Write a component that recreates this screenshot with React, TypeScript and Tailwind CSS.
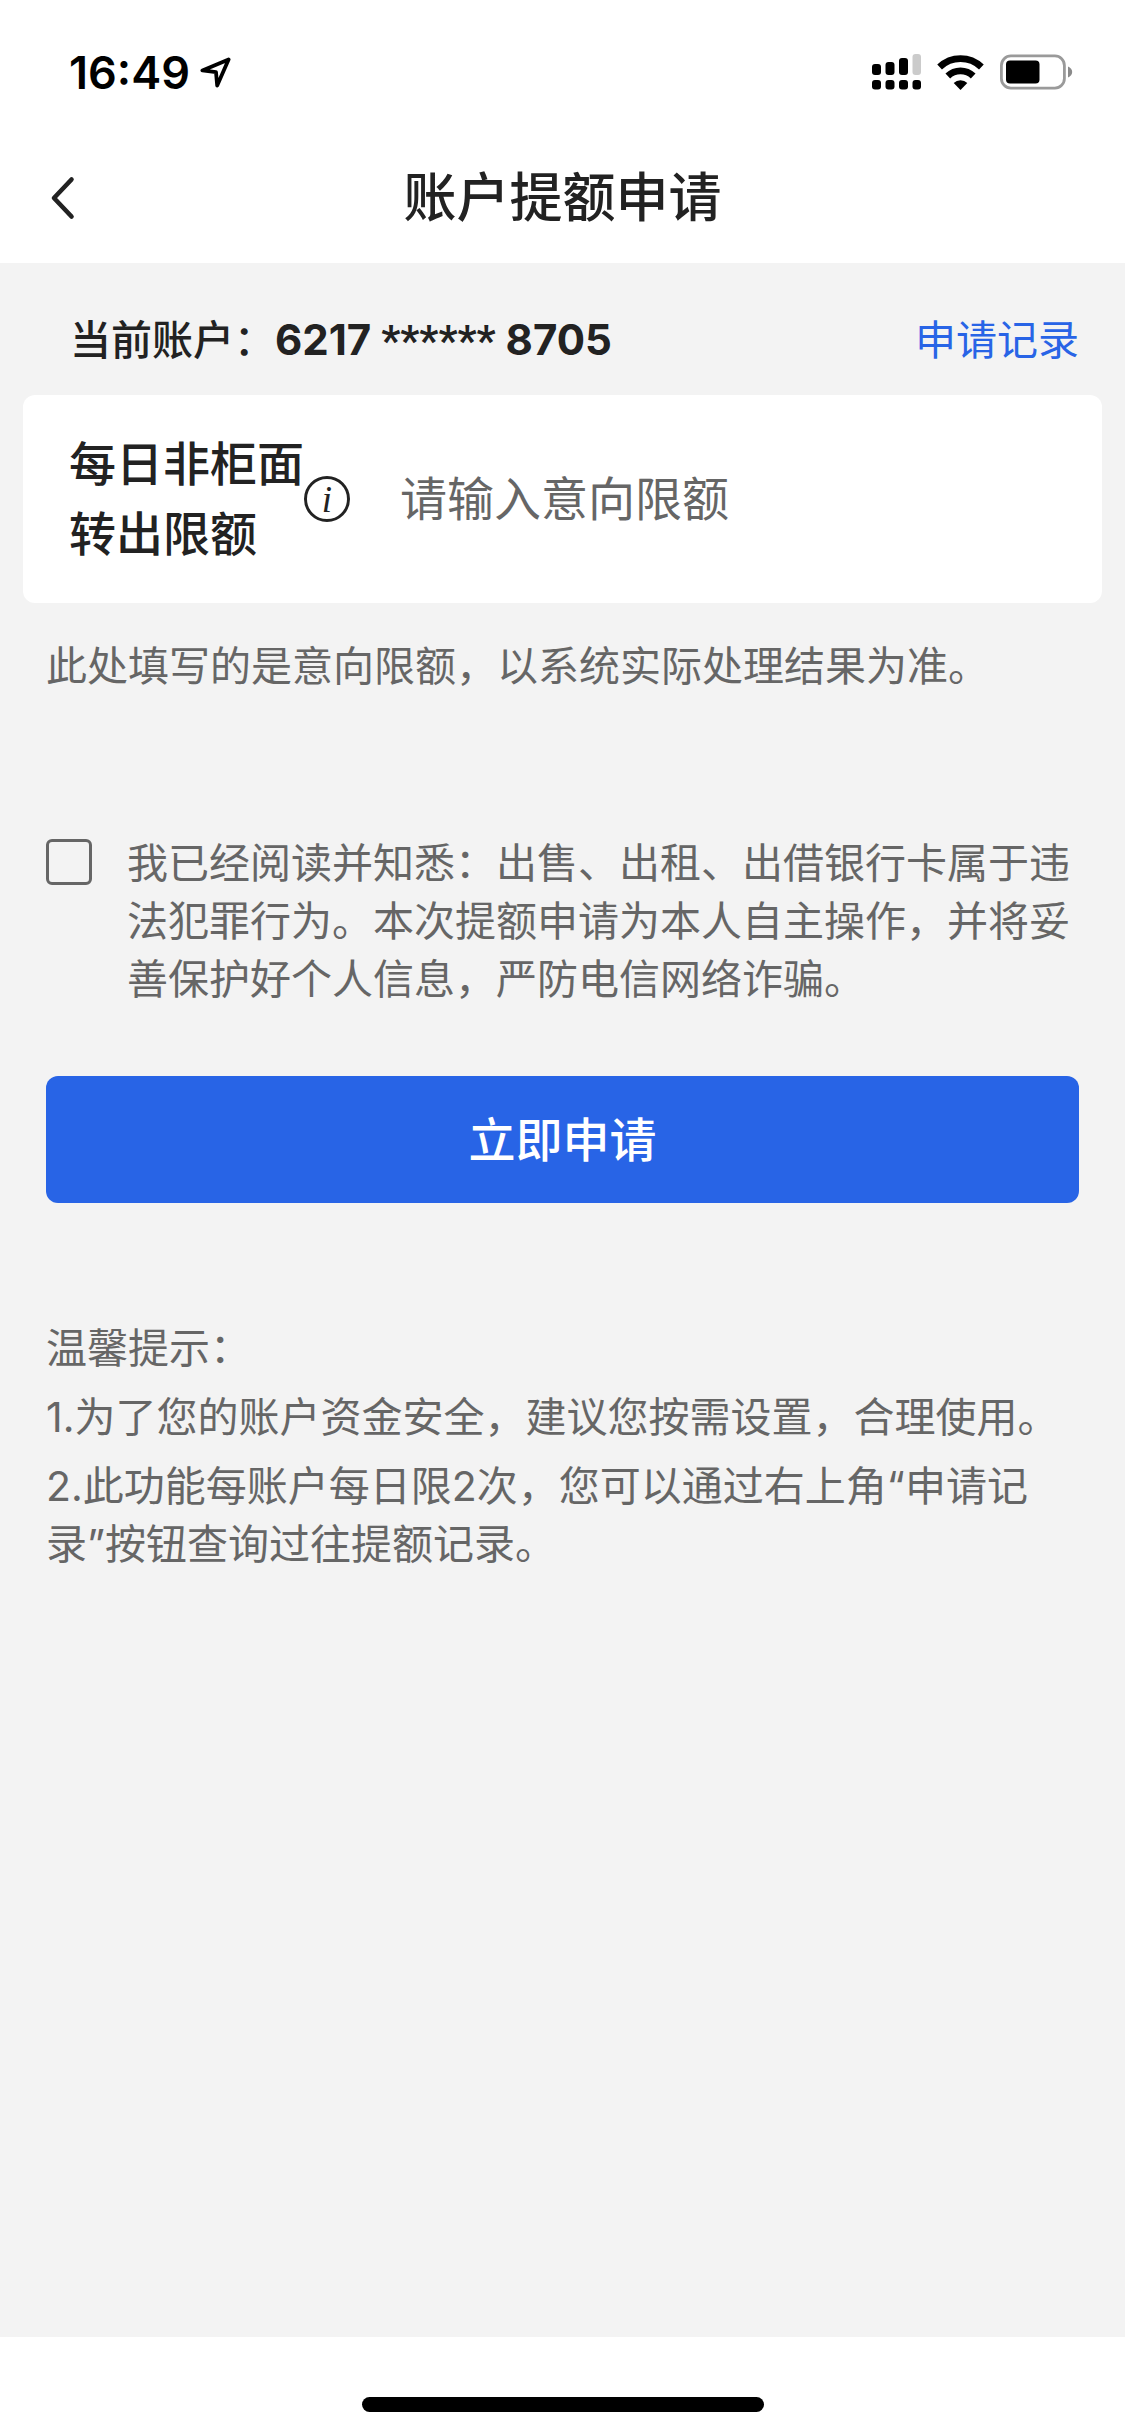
import React, { useState } from 'react';

const TIPS = [
  '1.为了您的账户资金安全，建议您按需设置，合理使用。',
  '2.此功能每账户每日限2次，您可以通过右上角“申请记录”按钮查询过往提额记录。',
];

const StatusBar: React.FC = () => (
  <div className="flex h-[132px] items-center justify-between bg-white pt-3 pl-[69px] pr-[52px] text-black">
    <div className="flex items-center gap-2.5">
      <span className="text-[45px] leading-none font-semibold">16:49</span>
      <svg width="31" height="31" viewBox="0 0 31 31" fill="none" stroke="currentColor" strokeWidth="3.8" strokeLinejoin="round">
        <path d="M28.6 2.4 2.4 13.4l13.6 1.8 1.2 13.4z" />
      </svg>
    </div>

    <div className="flex items-center gap-4">
      {/* Signal, double SIM */}
      <svg width="49" height="36" viewBox="0 0 49 36" fill="currentColor">
        <rect x="0" y="10" width="9" height="11" rx="3" />
        <rect x="13.5" y="8" width="9" height="13" rx="3" />
        <rect x="27" y="4" width="9" height="17" rx="3" />
        <rect x="40.5" y="0" width="8.5" height="21" rx="3" fill="#cbcbcb" />
        <rect x="0" y="26" width="9" height="9.5" rx="3" />
        <rect x="13.5" y="26" width="9" height="9.5" rx="3" />
        <rect x="27" y="26" width="9" height="9.5" rx="3" />
        <rect x="40.5" y="26" width="8.5" height="9.5" rx="3" />
      </svg>
      {/* Wifi */}
      <svg width="47" height="35" viewBox="0 0 47 35" fill="none" stroke="currentColor" strokeWidth="6.8">
        <path d="M2.6 12a30.2 30.2 0 0 1 41.8 0" />
        <path d="M10.8 21a18.4 18.4 0 0 1 25.4 0" />
        <path d="M23.5 35l-6.8-6.9a9.8 9.8 0 0 1 13.6 0z" fill="currentColor" stroke="none" />
      </svg>
      {/* Battery */}
      <svg width="73" height="36" viewBox="0 0 73 36" fill="none">
        <rect x="1.4" y="1.9" width="63" height="32.2" rx="9.5" stroke="#9a9a9a" strokeWidth="2.8" />
        <rect x="6" y="6.5" width="33.5" height="23" rx="4" fill="#000" />
        <path d="M68 12.5c2.6 1 4.2 3 4.2 5.5s-1.6 4.5-4.2 5.5z" fill="#8a8a8a" />
      </svg>
    </div>
  </div>
);

const App: React.FC = () => {
  const [amount, setAmount] = useState<string>('');
  const [agreed, setAgreed] = useState(false);

  const handleSubmit = (e: React.FormEvent) => {
    e.preventDefault();
  };

  return (
    <div
      lang="zh-CN"
      className="flex min-h-screen flex-col bg-[#f3f3f3] font-[Inter,'Noto_Sans_CJK_SC',sans-serif] text-[41px] leading-[58px] text-[#666666]"
    >
      <header className="bg-white">
        <StatusBar />
        <div className="grid h-[131px] grid-cols-[1fr_auto_1fr] items-center px-[46px] text-[#222222]">
          <button type="button" aria-label="返回" className="justify-self-start">
            <svg width="32" height="44" viewBox="0 0 32 44" fill="none" stroke="currentColor" strokeWidth="4.6" strokeLinecap="round" strokeLinejoin="round">
              <path d="M25.5 3.5 8 22 25.5 40.5" />
            </svg>
          </button>
          <h1 className="text-[53px] font-medium">账户提额申请</h1>
        </div>
      </header>

      <main className="flex-1">
        <div className="flex items-center justify-between pt-12 pr-[46px] pb-[26px] pl-[70px]">
          <p className="font-medium text-[#222222]">
            当前账户：
            <span className="text-[42px] leading-none font-bold">
              6217 <span className="font-[Roboto,sans-serif]">******</span> 8705
            </span>
          </p>
          <a href="#records" className="text-[#2864e6]">申请记录</a>
        </div>

        <form onSubmit={handleSubmit}>
          <div className="mx-[23px] flex items-center rounded-xl bg-white px-[46px] py-[34px]">
            <label htmlFor="amount" className="w-[235px] shrink-0 text-[47px] leading-[70px] font-medium text-[#222222]">
              每日非柜面转出限额
            </label>
            <button
              type="button"
              aria-label="限额说明"
              className="flex size-[46px] shrink-0 items-center justify-center rounded-full border-[3px] border-[#222222] font-['Liberation_Serif',serif] text-[37px] leading-none text-[#222222] italic"
            >
              i
            </button>
            <input
              id="amount"
              type="text"
              inputMode="decimal"
              value={amount}
              onChange={(e) => setAmount(e.target.value)}
              placeholder="请输入意向限额"
              className="ml-[50px] min-w-0 flex-1 text-[47px] leading-[70px] outline-none placeholder:text-[#666666]"
            />
          </div>

          <div className="px-[46px]">
            <p className="mt-[34px]">此处填写的是意向限额，以系统实际处理结果为准。</p>

            <div className="mt-[139px] flex items-start">
              <input
                id="agree"
                type="checkbox"
                checked={agreed}
                onChange={(e) => setAgreed(e.target.checked)}
                className="mt-[5px] size-[46px] shrink-0 appearance-none rounded-md border-[3px] border-[#666666] checked:bg-[#2864e6]"
              />
              <label htmlFor="agree" className="ml-[35px]">
                我已经阅读并知悉：出售、出租、出借银行卡属于违法犯罪行为。本次提额申请为本人自主操作，并将妥善保护好个人信息，严防电信网络诈骗。
              </label>
            </div>

            <button type="submit" className="mt-[68px] h-[127px] w-full rounded-xl bg-[#2864e6] text-[47px] font-medium text-white">
              立即申请
            </button>
          </div>
        </form>

        <section className="mt-[116px] flex flex-col gap-[11px] px-[46px]">
          <h2>温馨提示：</h2>
          {TIPS.map((tip) => (
            <p key={tip}>{tip}</p>
          ))}
        </section>
      </main>

      <footer className="flex h-[98px] justify-center bg-white pt-[60px]">
        <div className="h-[15px] w-[402px] rounded-full bg-black" />
      </footer>
    </div>
  );
};

export default App;
